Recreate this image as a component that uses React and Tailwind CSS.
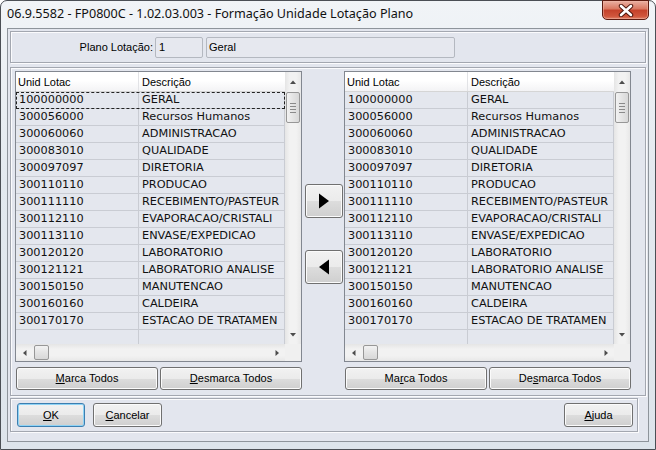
import React from 'react';

const rows = [
  ['100000000', 'GERAL'],
  ['300056000', 'Recursos Humanos'],
  ['300060060', 'ADMINISTRACAO'],
  ['300083010', 'QUALIDADE'],
  ['300097097', 'DIRETORIA'],
  ['300110110', 'PRODUCAO'],
  ['300111110', 'RECEBIMENTO/PASTEUR'],
  ['300112110', 'EVAPORACAO/CRISTALI'],
  ['300113110', 'ENVASE/EXPEDICAO'],
  ['300120120', 'LABORATORIO'],
  ['300121121', 'LABORATORIO ANALISE'],
  ['300150150', 'MANUTENCAO'],
  ['300160160', 'CALDEIRA'],
  ['300170170', 'ESTACAO DE TRATAMEN'],
];

const ui = "font-['Liberation_Sans',Arial,sans-serif]";
const listFont = "font-['DejaVu_Sans',Verdana,sans-serif]";

function Btn({ className = '', children, primary }) {
  return (
    <div
      className={`flex items-center justify-center rounded-[3px] border text-[11px] text-black bg-[linear-gradient(#f2f2f2_0%,#ebebeb_50%,#dddddd_50%,#cfcfcf_100%)] ${
        primary
          ? 'border-[#3c7fb1] shadow-[inset_0_0_0_1px_#8fd3f5]'
          : 'border-[#707070] shadow-[inset_0_0_0_1px_#fbfbfb]'
      } ${className}`}
    >
      {children}
    </div>
  );
}

function Arrow({ dir }) {
  return (
    <svg width="8" height="8" viewBox="0 0 8 8">
      {dir === 'up' && <path d="M1 6 L4 2.5 L7 6 Z" fill="#4d4d4d" />}
      {dir === 'down' && <path d="M1 2 L4 5.5 L7 2 Z" fill="#4d4d4d" />}
      {dir === 'left' && <path d="M5.5 1 L2 4 L5.5 7 Z" fill="#4d4d4d" />}
      {dir === 'right' && <path d="M2.5 1 L6 4 L2.5 7 Z" fill="#4d4d4d" />}
    </svg>
  );
}

function VScroll() {
  return (
    <div className="w-[16px] flex flex-col bg-[linear-gradient(90deg,#e5e5e5,#f2f2f2_30%,#f2f2f2_70%,#e8e8e8)]">
      <div className="h-[20px] flex items-center justify-center">
        <Arrow dir="up" />
      </div>
      <div className="mx-[1px] h-[31px] rounded-[2px] border border-[#979797] bg-[linear-gradient(90deg,#f2f2f2,#e4e4e4_50%,#d8d8d8)] flex flex-col items-center justify-center gap-[2px]">
        <div className="w-[6px] h-px bg-[#8a8a8a]" />
        <div className="w-[6px] h-px bg-[#8a8a8a]" />
        <div className="w-[6px] h-px bg-[#8a8a8a]" />
        <div className="w-[6px] h-px bg-[#8a8a8a]" />
      </div>
      <div className="flex-1" />
      <div className="h-[19px] flex items-center justify-center">
        <Arrow dir="down" />
      </div>
    </div>
  );
}

function HScroll() {
  return (
    <div className="h-[17px] flex bg-[linear-gradient(#e5e5e5,#f2f2f2_30%,#f2f2f2_70%,#e8e8e8)]">
      <div className="flex-1 flex items-center">
        <div className="w-[17px] flex items-center justify-center">
          <Arrow dir="left" />
        </div>
        <div className="ml-[1px] w-[15px] h-[15px] rounded-[2px] border border-[#979797] bg-[linear-gradient(#f2f2f2,#e4e4e4_50%,#d8d8d8)]" />
        <div className="flex-1" />
        <div className="w-[17px] flex items-center justify-center">
          <Arrow dir="right" />
        </div>
      </div>
      <div className="w-[16px] bg-[#f0f0f0]" />
    </div>
  );
}

function ListBox({ focus }) {
  return (
    <div className="w-[287px] h-[291px] border border-[#828790] bg-[#e4e7ee] flex flex-col">
      <div className="flex flex-1 min-h-0">
        <div className="flex-1 flex flex-col overflow-hidden">
          <div className={`${ui} h-[20px] flex text-[11px] text-black border-b border-[#d5d5d5] bg-[linear-gradient(#ffffff,#ffffff_45%,#f3f3f5)]`}>
            <div className="w-[123px] pl-[2px] pt-[2px] flex items-center border-r border-[#e2e3e6]">Unid Lotac</div>
            <div className="flex-1 pl-[3px] pt-[2px] flex items-center">Descrição</div>
          </div>
          {rows.map(([code, desc], i) => (
            <div
              key={code}
              className={`${listFont} h-[17px] flex text-[11.3px] text-[#111] border-b border-[#c9ccd3] relative`}
            >
              <div className="w-[123px] pl-[3px] pt-px flex items-center border-r border-[#c9ccd3] whitespace-nowrap">
                {code}
              </div>
              <div className="flex-1 pl-[3px] pt-px flex items-center whitespace-nowrap overflow-hidden border-r border-[#c9ccd3]">
                {desc}
              </div>
              {focus && i === 0 && (
                <div className="absolute inset-x-0 top-0 bottom-[-1px] border border-dashed border-[#222]" />
              )}
            </div>
          ))}
          <div className="flex-1 flex">
            <div className="w-[123px] border-r border-[#c9ccd3]" />
            <div className="flex-1 border-r border-[#c9ccd3]" />
          </div>
        </div>
        <VScroll />
      </div>
      <HScroll />
    </div>
  );
}

function Panel({ className = '', children }) {
  return (
    <div className={`border border-[#a3a7b0] shadow-[inset_1px_1px_0_#fbfbfd,1px_1px_0_#fbfbfd] ${className}`}>
      {children}
    </div>
  );
}

export default function App() {
  return (
    <div className={`${ui} w-[656px] h-[450px] flex flex-col border border-[#4b4f55] rounded-t-[7px] bg-[linear-gradient(#f1f4f7,#e3e9ef_40%,#dde4eb)]`}>
      <div className="h-[27px] flex items-start justify-between">
        <div className="pl-[6px] pt-[4px] text-[12.6px] text-[#111] font-['Noto_Sans','Open_Sans',sans-serif]">
          06.9.5582 - FP0800C - 1.02.03.003 - Formação Unidade Lotação Plano
        </div>
        <div className="mr-[6px] -mt-px w-[47px] h-[20px] rounded-b-[5px] border border-[#5c1b10] bg-[linear-gradient(#eab0a2,#d9765f_45%,#c4412a_50%,#d0563c_85%,#e0836a)] shadow-[inset_0_0_0_1px_#f1b9aa80] flex items-center justify-center">
          <svg width="16" height="13" viewBox="0 0 16 13">
            <path d="M3 2 L13 11 M13 2 L3 11" stroke="#4a1208" strokeWidth="4.4" strokeLinecap="round" />
            <path d="M3 2 L13 11 M13 2 L3 11" stroke="#ffffff" strokeWidth="2.6" strokeLinecap="round" />
          </svg>
        </div>
      </div>

      <div className="mx-[6px] mb-[7px] flex-1 border border-[#8e949b] bg-[#e3e6ee] px-[2px] pt-[2px] flex flex-col">
        <Panel className="h-[32px] flex items-center">
          <div className="w-[142px] text-right text-[11px] text-black">Plano Lotação:</div>
          <div className="ml-[2px] w-[48px] h-[21px] border border-[#b4b8c0] rounded-[2px] bg-[#e6e8ef] text-[11px] flex items-center pl-[3px]">
            1
          </div>
          <div className="ml-[3px] w-[249px] h-[21px] border border-[#b4b8c0] rounded-[2px] bg-[#e6e8ef] text-[11px] flex items-center pl-[2px]">
            Geral
          </div>
        </Panel>

        <Panel className="mt-[4px] h-[329px] pl-[4px] pt-[3px] flex">
          <div className="flex flex-col">
            <ListBox focus />
            <div className="mt-[5px] ml-[1px] flex gap-[2px]">
              <Btn className="w-[142px] h-[23px]">
                <span className="underline">M</span>arca Todos
              </Btn>
              <Btn className="w-[142px] h-[23px]">
                <span className="underline">D</span>esmarca Todos
              </Btn>
            </div>
          </div>
          <div className="ml-[3px] w-[38px] flex flex-col">
            <Btn className="mt-[113px] h-[34px]">
              <svg width="12" height="16" viewBox="0 0 12 16">
                <path d="M1 0.5 L11 8 L1 15.5 Z" fill="#000" />
              </svg>
            </Btn>
            <Btn className="mt-[32px] h-[34px]">
              <svg width="12" height="16" viewBox="0 0 12 16">
                <path d="M11 0.5 L1 8 L11 15.5 Z" fill="#000" />
              </svg>
            </Btn>
          </div>
          <div className="ml-[1px] flex flex-col">
            <ListBox />
            <div className="mt-[5px] ml-[1px] flex gap-[2px]">
              <Btn className="w-[142px] h-[23px]">
                Ma<span className="underline">r</span>ca Todos
              </Btn>
              <Btn className="w-[142px] h-[23px]">
                De<span className="underline">s</span>marca Todos
              </Btn>
            </div>
          </div>
        </Panel>

        <Panel className="mt-[2px] w-[628px] h-[34px] pl-[6px] pr-[4px] flex items-center">
          <Btn primary className="w-[68px] h-[24px]">
            <span className="underline">O</span>K
          </Btn>
          <Btn className="ml-[8px] w-[69px] h-[24px]">
            <span className="underline">C</span>ancelar
          </Btn>
          <div className="flex-1" />
          <Btn className="w-[69px] h-[24px]">
            <span className="underline">A</span>juda
          </Btn>
        </Panel>
      </div>
    </div>
  );
}
